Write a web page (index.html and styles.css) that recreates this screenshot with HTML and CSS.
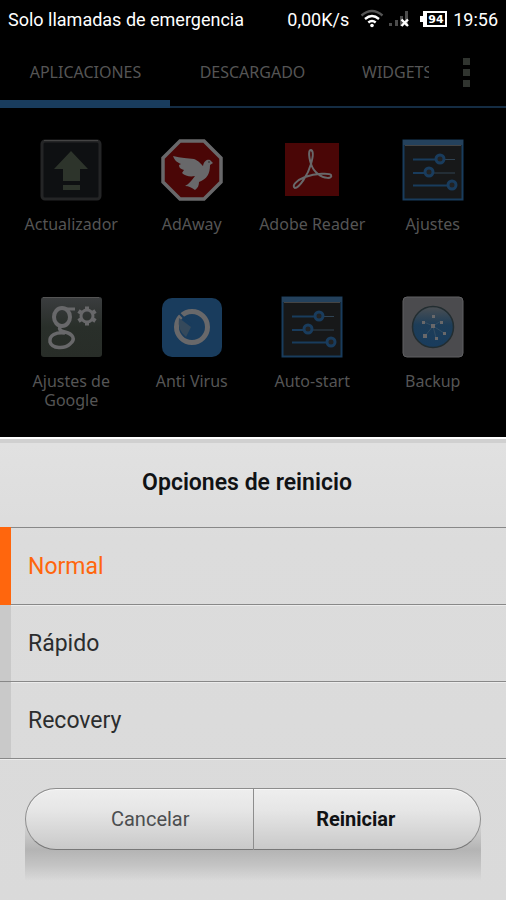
FILE: index.html
```
<!DOCTYPE html>
<html lang="es">
<head>
    <meta charset="UTF-8">
    <meta name="viewport" content="width=device-width, initial-scale=1.0">
    <title>Opciones de reinicio</title>
    <link rel="stylesheet" href="styles.css">
</head>
<body>
    <header class="status-bar">
        <span class="carrier">Solo llamadas de emergencia</span>
        <span class="speed">0,00K/s</span>
        <svg class="wifi" width="24" height="20" viewBox="0 0 24 20" fill="none" stroke-width="2.4">
            <path d="M1.5 6.500Q12 -2.500 22.500 6.500" stroke="#555"/>
            <path d="M5 10Q12 4 19 10M8.300 13.500Q12 10.300 15.700 13.500" stroke="#fff"/>
            <circle cx="12" cy="16.500" r="1.800" fill="#fff"/>
        </svg>
        <svg class="signal" width="22" height="20" viewBox="0 0 22 20">
            <path d="M1 14h3v3H1zM7 11h3v6H7zM12 7h3v10h-3zM17 2h3v15h-3z" fill="#4c4c4c"/>
            <path d="M13.500 10.500l6.500 6.500M20 10.500l-6.500 6.500" stroke="#fff" stroke-width="2.400"/>
        </svg>
        <svg class="battery" width="28" height="20" viewBox="0 0 28 20">
            <path d="M4 3h22v14H4z" fill="none" stroke="#fff" stroke-width="2"/>
            <path d="M0 7h3v6H0zM5 4h2v12H5z" fill="#fff"/>
            <text x="16" y="14" text-anchor="middle">94</text>
        </svg>
        <time class="clock">19:56</time>
    </header>

    <nav class="tabs">
        <button class="tab active"><span>APLICACIONES</span></button>
        <button class="tab tab-downloads"><span>DESCARGADO</span></button>
        <button class="tab tab-widgets"><span>WIDGETS</span></button>
        <button class="more" aria-label="Más opciones"><i></i><i></i><i></i></button>
    </nav>

    <main class="apps">
        <a class="app" href="#">
            <svg width="62" height="62" viewBox="0 0 62 62">
                <rect x="2" y="2" width="58" height="58" rx="3" fill="#0e1012" stroke="#242526" stroke-width="3"/>
                <path d="M4 1.500h54" stroke="#444"/>
                <path d="M31 12L48 30H40V42H23V30H14zM23 46h17v5H23z" fill="#2d342b"/>
            </svg>
            <span>Actualizador</span>
        </a>
        <a class="app" href="#">
            <svg width="62" height="62" viewBox="0 0 62 62">
                <path d="M19 2H43L60 19V43L43 60H19L2 43V19z" fill="#4a0606" stroke="#68686a" stroke-width="3.500"/>
                <path d="M12 17C20 19 27 19 33 20C38 22 40 25 42 27C43 21 47 20 49 21L52 24L49 26C49 35 46 40 38 43C38 46 37 49 34 51C31 49 28 47 24 47C28 45 31 41 34 37C29 38 24 37 21 34L23 31C19 30 18 28 18 26L20 25C15 23 13 20 12 17z" fill="#68686a"/>
                <circle cx="48" cy="23" r="0.800" fill="#222"/>
            </svg>
            <span>AdAway</span>
        </a>
        <a class="app" href="#">
            <svg width="62" height="62" viewBox="0 0 62 62">
                <rect x="4" y="4" width="54" height="53" fill="#4a0606"/>
                <path d="M30 25C27 15 28 11 30 11C33 12 32 18 30 25C27 36 18 49 14 49C10 47 16 41 24 38C35 34 49 34 50 36C52 40 43 40 37 35C33 32 31 28 30 25z" fill="none" stroke="#68686a" stroke-width="2"/>
            </svg>
            <span>Adobe Reader</span>
        </a>
        <a class="app" href="#">
            <svg width="62" height="62" viewBox="0 0 62 62">
                <path d="M1.500 1.500h59v59h-59z" fill="#171819" stroke="#193c5d" stroke-width="2"/>
                <path d="M1 3.500h60" stroke="#24415c" stroke-width="5"/>
                <path d="M3 6.500h56" stroke="#444"/>
                <path d="M11 20.500h42M11 34h42" stroke="#304353"/>
                <path d="M11 20.500h27M11 34h16M11 46.500h37" stroke="#193c5d" stroke-width="2"/>
                <g fill="#222" stroke="#193c5d" stroke-width="3"><circle cx="38" cy="20" r="4"/><circle cx="27" cy="33" r="4"/><circle cx="50" cy="46" r="4"/></g>
            </svg>
            <span>Ajustes</span>
        </a>
        <a class="app" href="#">
            <svg width="62" height="62" viewBox="0 0 62 62">
                <defs>
                    <linearGradient id="google-bg" x2="0" y2="1"><stop stop-color="#3b3d3f"/><stop offset="0.500" stop-color="#292f2a"/><stop offset="1" stop-color="#282d28"/></linearGradient>
                </defs>
                <rect x="1" y="1" width="61" height="60" rx="3" fill="url(#google-bg)"/>
                <path d="M3 1.500h56" stroke="#555"/>
                <g fill="none" stroke="#68686a">
                    <ellipse cx="22" cy="21" rx="8" ry="9" stroke-width="4"/>
                    <path d="M25 13H35" stroke-width="3"/>
                    <path d="M21 30C18 33 20 35 25 36C33 38 36 43 30 48C25 53 12 53 10 46C9 39 16 36 25 37" stroke-width="3.500"/>
                    <circle cx="47" cy="20" r="6" stroke-width="3"/>
                    <path d="M47 10.500v3M47 26.500v3M38.500 15l3 2M52.500 23l3 2M38.500 25l3-2M52.500 17l3-2" stroke-width="4"/>
                </g>
            </svg>
            <span>Ajustes de Google</span>
        </a>
        <a class="app" href="#">
            <svg width="62" height="62" viewBox="0 0 62 62">
                <rect x="1" y="2" width="60" height="59" rx="10" fill="#193c5d"/>
                <circle cx="31" cy="31" r="15.500" fill="none" stroke="#68686a" stroke-width="5"/>
                <path d="M18 22L30 31L25 41Q16 34 18 22" fill="#35495b"/>
                <path d="M18 17L30 29" stroke="#193c5d" stroke-width="2"/>
            </svg>
            <span>Anti Virus</span>
        </a>
        <a class="app" href="#">
            <svg width="62" height="62" viewBox="0 0 62 62">
                <path d="M1.500 1.500h59v59h-59z" fill="#171819" stroke="#193c5d" stroke-width="2"/>
                <path d="M1 3.500h60" stroke="#24415c" stroke-width="5"/>
                <path d="M3 6.500h56" stroke="#444"/>
                <path d="M11 20.500h42M11 34h42" stroke="#304353"/>
                <path d="M11 20.500h27M11 34h16M11 46.500h37" stroke="#193c5d" stroke-width="2"/>
                <g fill="#222" stroke="#193c5d" stroke-width="3"><circle cx="38" cy="20" r="4"/><circle cx="27" cy="33" r="4"/><circle cx="50" cy="46" r="4"/></g>
            </svg>
            <span>Auto-start</span>
        </a>
        <a class="app" href="#">
            <svg width="62" height="62" viewBox="0 0 62 62">
                <defs>
                    <linearGradient id="globe" x2="0" y2="1"><stop stop-color="#4b4f53"/><stop offset="0.450" stop-color="#1d3d58"/><stop offset="1" stop-color="#193c5d"/></linearGradient>
                </defs>
                <rect x="1" y="1" width="60" height="60" rx="4" fill="#4b4b4e" stroke="#606062"/>
                <circle cx="31" cy="31" r="20.500" fill="url(#globe)" stroke="#222d31" stroke-width="1.500"/>
                <path d="M22 26l9 4l8-5M31 30l-8 10M31 30l11 7M31 30l3 12" fill="none" stroke="#334d63"/>
                <path d="M29 28h4v4h-4zM21 38h4v4h-4zM33 41h3v3h-3zM41 36h3v3h-3zM38 25h3v3h-3zM20 25h3v3h-3zM30 19h3v3h-3z" fill="#68686a"/>
            </svg>
            <span>Backup</span>
        </a>
    </main>

    <form class="sheet">
        <h1>Opciones de reinicio</h1>
        <div class="options">
            <label class="option"><input type="radio" name="mode" checked><span>Normal</span></label>
            <label class="option"><input type="radio" name="mode"><span>Rápido</span></label>
            <label class="option"><input type="radio" name="mode"><span>Recovery</span></label>
        </div>
        <div class="actions">
            <div class="pill">
                <button type="button" class="cancel">Cancelar</button>
                <button type="button" class="confirm">Reiniciar</button>
            </div>
        </div>
    </form>
</body>
</html>
```

FILE: styles.css
```
* {
    box-sizing: border-box;
}
body {
    margin: 0;
    min-height: 100vh;
    display: flex;
    flex-direction: column;
    background: #000;
    font-family: Roboto, sans-serif;
}
button {
    font: inherit;
    border: none;
    background: none;
    padding: 0;
    cursor: pointer;
}

/* status bar */
.status-bar {
    display: flex;
    align-items: center;
    height: 38px;
    padding: 0 8px;
    color: #fff;
    font-size: 18px;
    white-space: nowrap;
}
.carrier {
    flex: 1;
}
.wifi {
    margin-left: 11px;
}
.signal {
    margin: 0 10px 0 4px;
}
.battery text {
    font: bold 11px "DejaVu Sans", sans-serif;
    fill: #fff;
}
.clock {
    margin-left: 5px;
}

/* tabs */
.tabs {
    display: flex;
    height: 70px;
    border-bottom: 2px solid #142c43;
    font-family: "Noto Sans", sans-serif;
    font-size: 16px;
}
.tab {
    color: #555;
    padding: 0 27px 0 28px;
    white-space: nowrap;
}
.tab span {
    display: block;
    overflow: hidden;
}
.tab.active {
    width: 170px;
    border-bottom: 8px solid #193c5d;
    padding-top: 6px;
    margin-bottom: -2px;
}
.tab-downloads {
    width: 164px;
}
.tab-widgets {
    width: 122px;
}
.more {
    display: flex;
    flex-direction: column;
    justify-content: center;
    gap: 4px;
    padding: 0 7px;
}
.more i {
    width: 7px;
    height: 7px;
    background: #30342f;
}

/* app grid */
.apps {
    flex: 1;
    display: grid;
    grid-template-columns: repeat(4, 1fr);
    grid-template-rows: 157px auto;
    padding: 31px 13px 0 11px;
    font-family: "Noto Sans", sans-serif;
}
.app {
    display: flex;
    flex-direction: column;
    align-items: center;
    gap: 14px;
    color: #555;
    font-size: 16px;
    line-height: 19px;
    text-align: center;
    text-decoration: none;
}
.app span {
    max-width: 112px;
}

/* bottom sheet */
.sheet {
    border-top: 2px solid #fff;
    background: linear-gradient(#d0d0d0 4px, #e1e1e1 4px, #dcdcdc 100px, #dadada);
}
.sheet h1 {
    margin: 0;
    padding: 30px 12px 30px 0;
    font-size: 23px;
    line-height: 28px;
    font-weight: 600;
    text-align: center;
    color: #101214;
}
.options {
    border-top: 1px solid #888;
}
.option {
    display: flex;
    height: 77px;
    border-bottom: 1px solid #888;
    box-shadow: 0 1px #ececec;
    font-size: 23px;
    color: #2b2d2e;
    cursor: pointer;
}
.option input {
    appearance: none;
    width: 11px;
    margin: 0;
    background: #c9c9c9;
}
.option input:checked {
    margin: -1px 0;
    background: #ff660d;
}
.option input:checked + span {
    color: #ff660d;
}
.option span {
    flex: 1;
    padding-left: 17px;
    line-height: 77px;
}
.actions {
    padding: 29px 25px 50px;
}
.pill {
    position: relative;
    z-index: 0;
    display: flex;
    height: 62px;
}
/* soft shadow falling under the pill */
.pill::after {
    content: "";
    position: absolute;
    z-index: -1;
    top: 31px;
    left: 0;
    right: 0;
    height: 62px;
    background: linear-gradient(transparent, #b4b4b4 50%, #c4c4c4 75%, transparent);
}
.pill button {
    flex: 1;
    border: 1px solid #8d8d8d;
    border-bottom-color: #777;
    background: linear-gradient(#eee, #e6e6e6 35%, #c9c9c9);
    box-shadow: inset 0 1px #f8f8f8;
    font-size: 20px;
}
.pill .cancel {
    border-radius: 31px 0 0 31px;
    padding-left: 22px;
    color: #4c4e50;
}
.pill .confirm {
    border-left: none;
    border-radius: 0 31px 31px 0;
    padding-right: 22px;
    font-weight: 700;
    color: #101214;
}
```
